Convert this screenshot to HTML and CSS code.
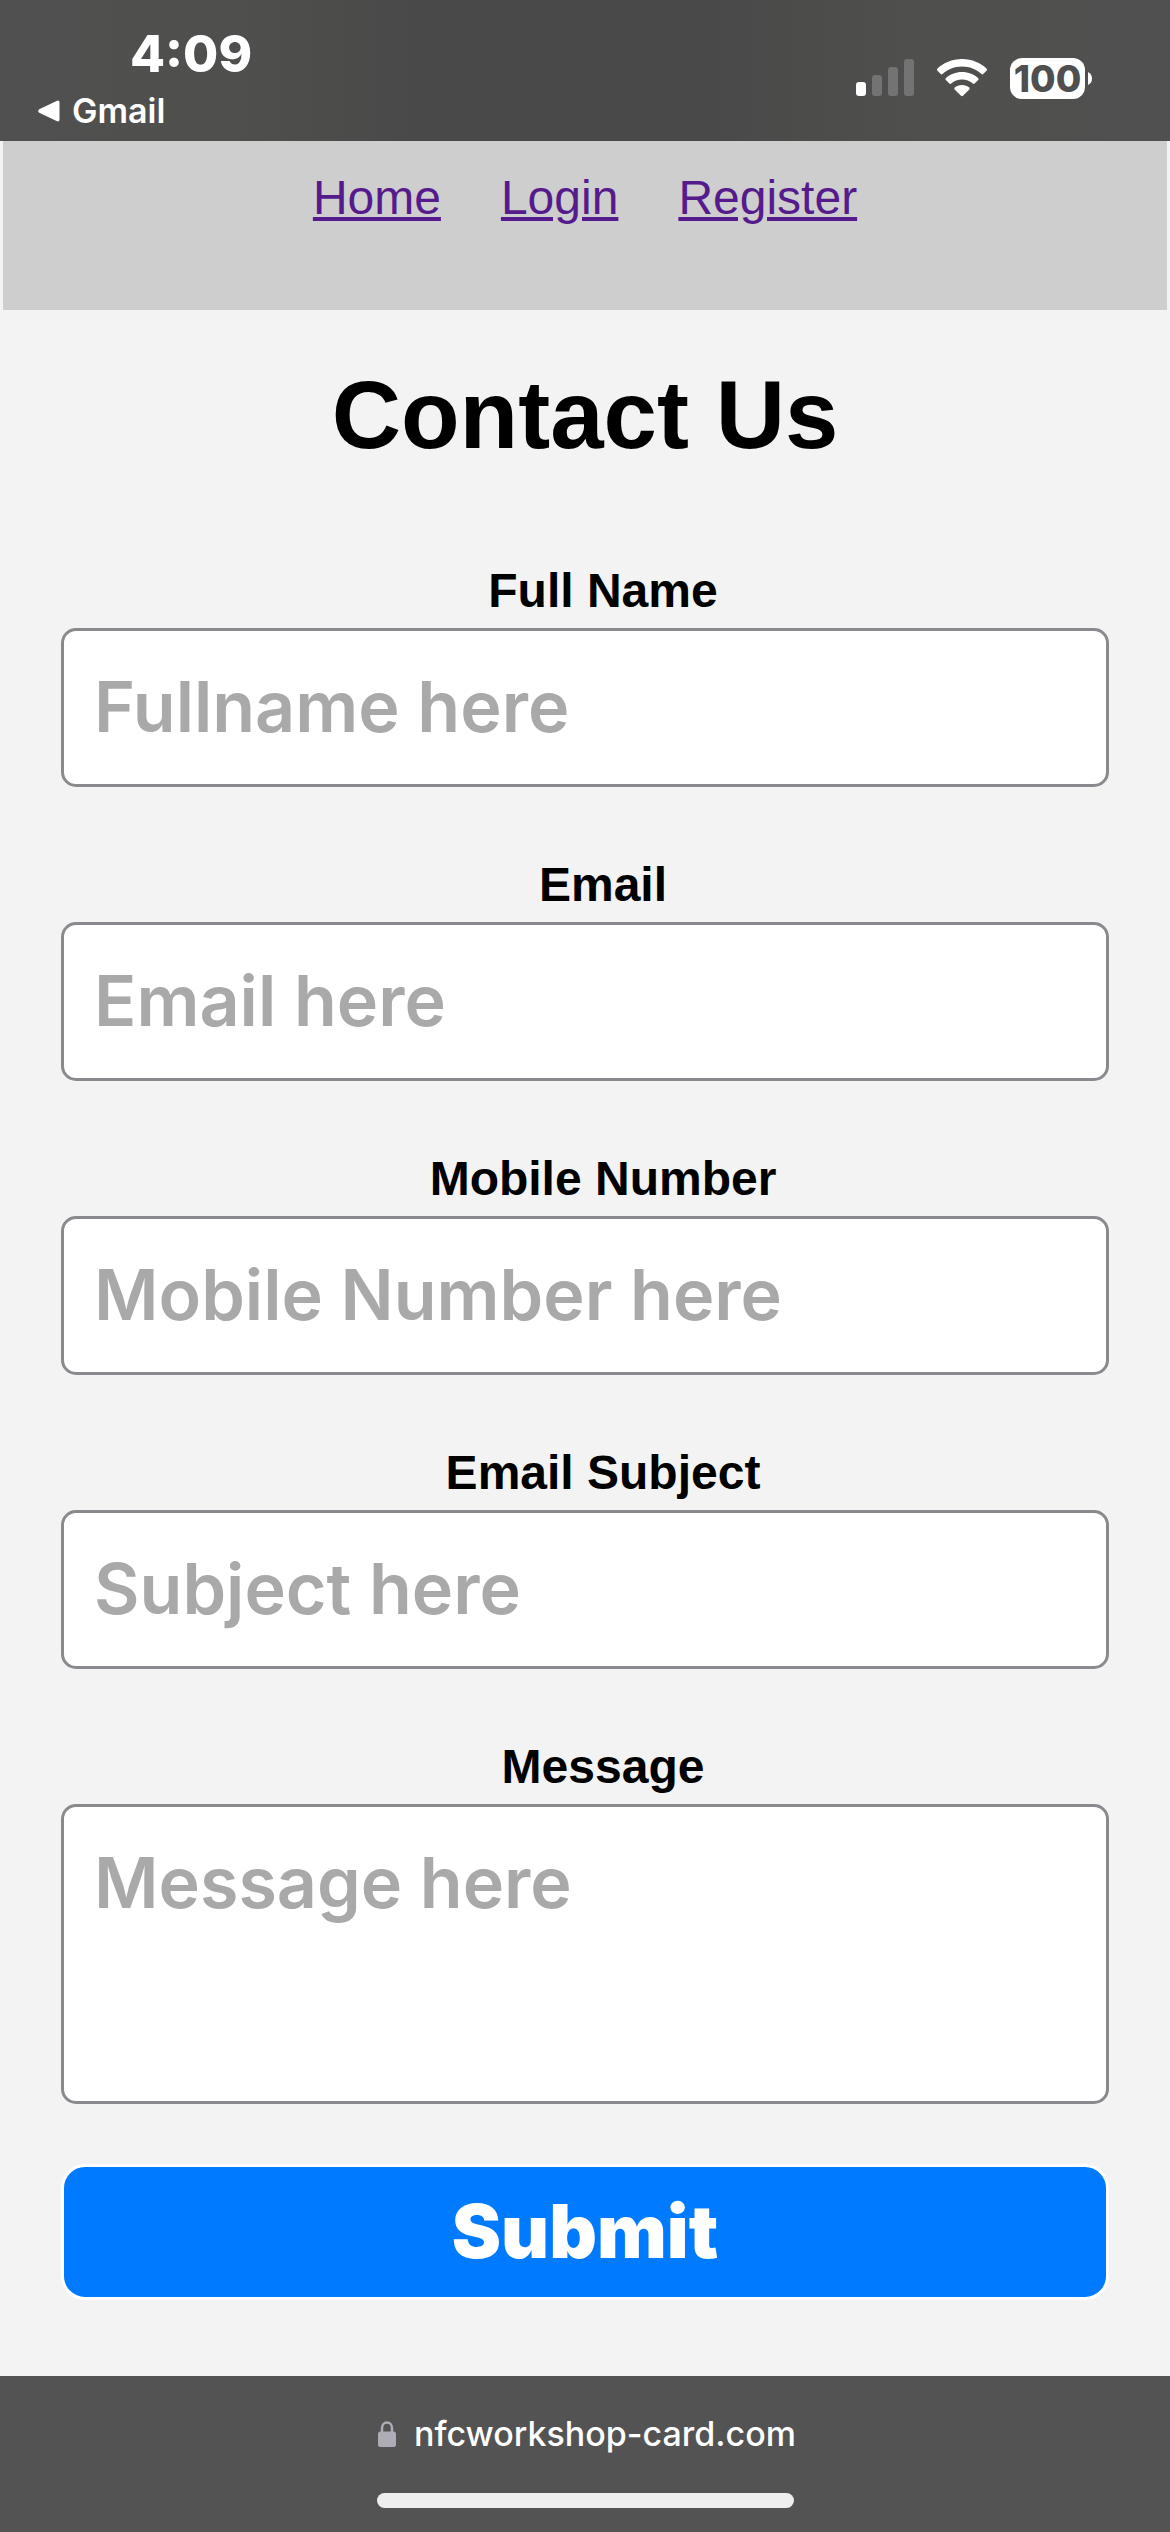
FILE: index.html
```html
<!DOCTYPE html>
<html lang="en">
<head>
<meta charset="utf-8">
<meta name="viewport" content="width=device-width, initial-scale=1">
<title>Contact Us</title>
<link rel="stylesheet" href="styles.css">
</head>
<body>
<header class="status">
  <div class="status-left">
    <time class="clock">4:09</time>
    <a class="back" href="#">
      <svg width="22" height="22" viewBox="0 0 22 22" aria-hidden="true"><path d="M1.2 9.2 18.6.9Q21.500-.2 21.500 2.500V19.500Q21.500 22.200 18.600 21.100L1.200 12.800Q-.8 11 1.200 9.200Z" fill="currentColor"/></svg>
      <span>Gmail</span>
    </a>
  </div>
  <div class="status-right">
    <svg width="58" height="38" viewBox="0 0 58 38" aria-hidden="true">
      <rect x="0" y="23" width="10" height="14" rx="3" fill="#fff"/>
      <g fill="#737373"><rect x="16" y="16" width="10" height="21" rx="3"/><rect x="32" y="8" width="10" height="29" rx="3"/><rect x="48" y="0" width="10" height="37" rx="3"/></g>
    </svg>
    <svg width="52" height="38" viewBox="0 0 52 38" fill="#fff" aria-hidden="true">
      <path d="M26 0C36 0 44.500 3.800 50.700 9.700Q51.600 10.700 50.700 11.600L47.300 15Q46.400 15.800 45.500 15C40 10.200 33.500 7.500 26 7.500S12 10.200 6.500 15Q5.600 15.800 4.700 15L1.300 11.600Q.4 10.700 1.300 9.700C7.500 3.800 16 0 26 0Z"/>
      <path d="M26 13C32.500 13 38 15.300 42.200 19.200Q43.100 20.200 42.200 21.100L38.600 24.600Q37.800 25.400 36.800 24.600C33.800 22 30.200 20.500 26 20.500S18.200 22 15.200 24.600Q14.200 25.400 13.400 24.600L9.800 21.100Q8.900 20.200 9.800 19.200C14 15.300 19.500 13 26 13Z"/>
      <path d="M26 26C28.900 26 31.400 27 33.300 28.600Q34.200 29.500 33.300 30.500L27 36.800Q26 37.700 25 36.800L18.700 30.500Q17.800 29.500 18.700 28.600C20.600 27 23.100 26 26 26Z"/>
    </svg>
    <div class="battery">
      <span class="charge">100</span>
      <svg width="4" height="13" viewBox="0 0 4 13" aria-hidden="true"><path d="M0 0Q4 2 4 6.500T0 13Z" fill="#fff"/></svg>
    </div>
  </div>
</header>

<nav class="nav">
  <a href="#">Home</a>
  <a href="#">Login</a>
  <a href="#">Register</a>
</nav>

<main class="main">
  <h1>Contact Us</h1>
  <form class="form">
    <div class="field">
      <label for="name">Full Name</label>
      <input id="name" type="text" placeholder="Fullname here">
    </div>
    <div class="field">
      <label for="email">Email</label>
      <input id="email" type="email" placeholder="Email here">
    </div>
    <div class="field">
      <label for="mobile">Mobile Number</label>
      <input id="mobile" type="tel" placeholder="Mobile Number here">
    </div>
    <div class="field">
      <label for="subject">Email Subject</label>
      <input id="subject" type="text" placeholder="Subject here">
    </div>
    <div class="field">
      <label for="message">Message</label>
      <textarea id="message" placeholder="Message here"></textarea>
    </div>
    <button class="submit" type="submit">Submit</button>
  </form>
</main>

<footer class="browser-bar">
  <div class="address">
    <svg width="18" height="26" viewBox="0 0 18 26" aria-hidden="true"><path d="M4 12V7a5 5.500 0 0 1 10 0v5" fill="none" stroke="#aeadb5" stroke-width="2.500"/><rect y="10.500" width="18" height="15.500" rx="2.500" fill="#aeadb5"/></svg>
    <span>nfcworkshop-card.com</span>
  </div>
  <div class="home-indicator"></div>
</footer>
</body>
</html>
```
FILE: styles.css
```css
* {
  box-sizing: border-box;
}

body {
  margin: 0;
  min-height: 100vh;
  display: flex;
  flex-direction: column;
  background: #f3f3f3;
  color: #000;
  font-family: "Liberation Sans", Arial, sans-serif;
  font-size: 48px;
}

.status {
  display: flex;
  justify-content: space-between;
  align-items: flex-start;
  height: 141px;
  padding: 24px 78px 0 38px;
  background: linear-gradient(90deg, #505050 0, #4f4f4d 20%, #494949 36%, #494949 60%, #4f4f4d 78%, #505050 100%);
  color: #fff;
  font-family: Inter, sans-serif;
}

.status-left {
  display: flex;
  flex-direction: column;
  gap: 7px;
}

.clock {
  padding-left: 92px;
  font-size: 51px;
  font-weight: 800;
  line-height: 60px;
}

.back {
  display: flex;
  align-items: center;
  gap: 12px;
  color: inherit;
  font-size: 34px;
  font-weight: 600;
  line-height: 40px;
  text-decoration: none;
}

.status-right {
  display: flex;
  align-items: center;
  height: 108px;
  gap: 22px;
}

.battery {
  display: flex;
  align-items: center;
  gap: 3px;
}

.charge {
  width: 75px;
  border-radius: 12px;
  background: #fff;
  color: #4f4f4f;
  font-size: 37px;
  font-weight: 800;
  line-height: 41px;
  text-align: center;
}

.nav {
  display: flex;
  justify-content: center;
  gap: 60px;
  height: 169px;
  margin: 0 3px;
  padding-top: 29px;
  background: #cecece;
}

.nav a {
  color: #551a8b;
  line-height: 55px;
}

.main {
  padding: 50px 61px 76px;
}

h1 {
  margin: 0 0 93px;
  font-size: 96px;
  line-height: 110px;
  text-align: center;
}

.form {
  display: flex;
  flex-direction: column;
}

.field {
  display: flex;
  flex-direction: column;
  gap: 10px;
  margin-bottom: 70px;
}

.field:nth-last-child(2) {
  margin-bottom: 60px;
}

label {
  padding-left: 36px;
  font-weight: 700;
  line-height: 55px;
  text-align: center;
}

input,
textarea {
  width: 100%;
  height: 159px;
  margin: 0;
  padding: 32px 30px 34px;
  border: 3px solid #8a8a8e;
  border-radius: 15px;
  background: #fff;
  font: 600 70px/87px Inter, sans-serif;
}

textarea {
  display: block;
  height: 300px;
  resize: none;
}

::placeholder {
  color: #a9a9a9;
  opacity: 1;
}

.submit {
  height: 136px;
  padding: 0 0 2px;
  border: 3px solid #fff;
  border-radius: 24px;
  background: #007aff;
  color: #fff;
  font: 900 74px/87px Inter, sans-serif;
}

.browser-bar {
  display: flex;
  flex-direction: column;
  align-items: center;
  gap: 39px;
  margin-top: auto;
  padding: 38px 0 24px;
  background: #535353;
  color: #fff;
  font: 500 34px/40px Inter, sans-serif;
}

.address {
  display: flex;
  align-items: center;
  gap: 18px;
  padding-left: 4px;
}

.home-indicator {
  width: 417px;
  height: 15px;
  border-radius: 8px;
  background: #eee;
}
```
